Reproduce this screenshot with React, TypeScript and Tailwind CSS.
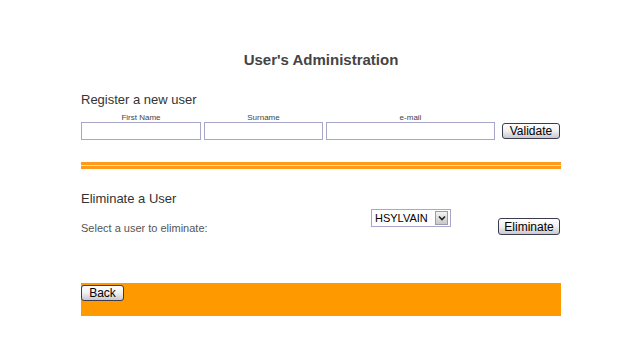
const font = { fontFamily: '"Liberation Sans", Arial, sans-serif' };

function OldButton({ label, className }: { label: string; className: string }) {
  return (
    <div
      className={`flex items-center justify-center rounded-[3px] border border-[#3c3c50] bg-gradient-to-b from-white via-[#f0f0f0] to-[#c8c8d0] text-[12px] leading-none text-black ${className}`}
    >
      {label}
    </div>
  );
}

const fields = [
  { label: "First Name", w: "w-[120px]" },
  { label: "Surname", w: "w-[119px]" },
  { label: "e-mail", w: "w-[169px]" },
];

export default function App() {
  return (
    <div className="h-[340px] w-[640px] bg-white" style={font}>
      <div className="ml-[81px] w-[480px] pt-[51px]">
        <h1 className="h-[18px] text-center text-[15px] font-bold leading-[18px] text-[#444]">
          User's Administration
        </h1>

        <h2 className="mt-[23px] text-[13px] leading-[15px] text-[#333]">Register a new user</h2>

        <div className="mt-[6px] flex items-end">
          <div className="flex gap-[3px]">
            {fields.map((f) => (
              <div key={f.label} className={f.w}>
                <div className="text-center text-[8px] leading-[9px] text-[#444]">{f.label}</div>
                <div className="h-[18px] border border-[#a9a7c9] bg-white" />
              </div>
            ))}
          </div>
          <OldButton label="Validate" className="mb-[1px] ml-[7px] h-[16px] w-[58px]" />
        </div>

        <div className="mt-[22px] h-[7px] border-y-[3px] border-[#ff9a1a] bg-[#fde2b8]" />

        <h2 className="mt-[22px] text-[13px] leading-[15px] text-[#333]">Eliminate a User</h2>

        <div className="mt-[3px] flex items-start">
          <div className="mt-[13px] w-[290px] text-[11px] leading-[13px] text-[#555]">
            Select a user to eliminate:
          </div>
          <div className="flex h-[18px] w-[80px] items-center justify-between border border-[#a9a7c9] bg-white pl-[3px] pr-[2px]">
            <span className="text-[11px] leading-none text-black">HSYLVAIN</span>
            <span className="flex h-[14px] w-[13px] items-center justify-center border border-[#9a9ab0] bg-gradient-to-b from-[#f4f4f4] to-[#c8c8c8]">
              <svg width="8" height="6" viewBox="0 0 8 6">
                <path d="M1 1.5 L4 4.5 L7 1.5" fill="none" stroke="#222" strokeWidth="1.6" />
              </svg>
            </span>
          </div>
          <OldButton label="Eliminate" className="ml-[47px] mt-[9px] h-[17px] w-[62px]" />
        </div>

        <div className="mt-[48px] h-[33px] bg-[#ff9900] pt-[2px]">
          <OldButton label="Back" className="h-[16px] w-[43px]" />
        </div>
      </div>
    </div>
  );
}
